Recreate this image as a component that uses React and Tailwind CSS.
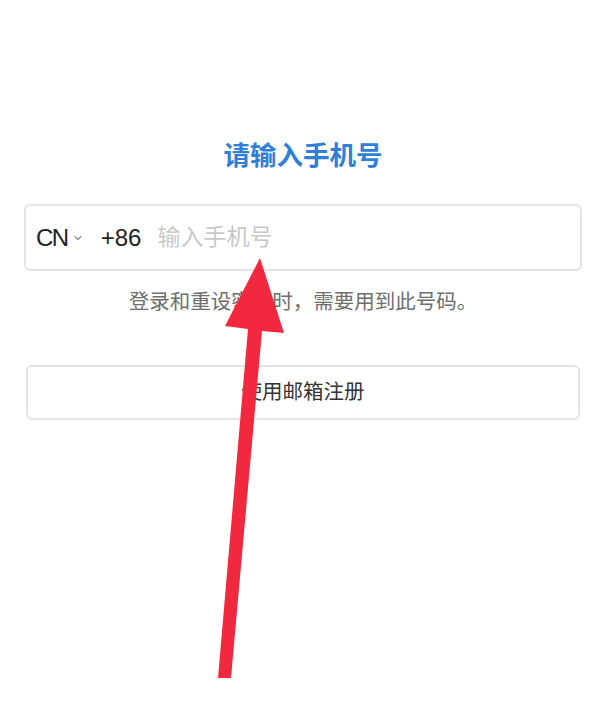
import { ChevronDown } from 'lucide-react';

const font = { fontFamily: '"Liberation Sans", "Noto Sans CJK SC", sans-serif' };

function Arrow() {
  // red annotation arrow drawn over the form
  return (
    <svg
      className="absolute left-0 top-0 pointer-events-none"
      width="606"
      height="720"
      viewBox="0 0 606 720"
    >
      <polygon
        points="260,258 284,333 262,331 231,678 218,678 248,329 225,326"
        fill="#f2283f"
      />
    </svg>
  );
}

export default function App() {
  return (
    <div className="relative w-full h-[720px] bg-white overflow-hidden" style={font}>
      <div className="flex flex-col items-center px-6 pt-[139px]">
        <h1 className="text-[26.5px] leading-[34px] font-semibold text-[#2f7fd8]">请输入手机号</h1>

        <div className="mt-[31px] w-full h-[67px] flex items-center border-2 border-[#e4e4e4] rounded-md px-[10px]">
          <span className="text-[24px] text-[#222] tracking-[-1.5px]">CN</span>
          <ChevronDown className="ml-[4px] text-[#8a8a8a]" size={12} strokeWidth={2.5} />
          <span className="ml-[17px] text-[24px] text-[#222]">+86</span>
          <span className="ml-[16px] text-[23px] text-[#c8c8c8]">输入手机号</span>
        </div>

        <p className="mt-[19px] text-[20.5px] leading-[24px] text-[#6e6e6e]">登录和重设密码时，需要用到此号码。</p>

        <button className="mt-[51px] w-[554px] h-[55px] flex items-center justify-center border-2 border-[#e4e4e4] rounded-md bg-white text-[20.5px] text-[#333]">
          使用邮箱注册
        </button>
      </div>
      <Arrow />
    </div>
  );
}
